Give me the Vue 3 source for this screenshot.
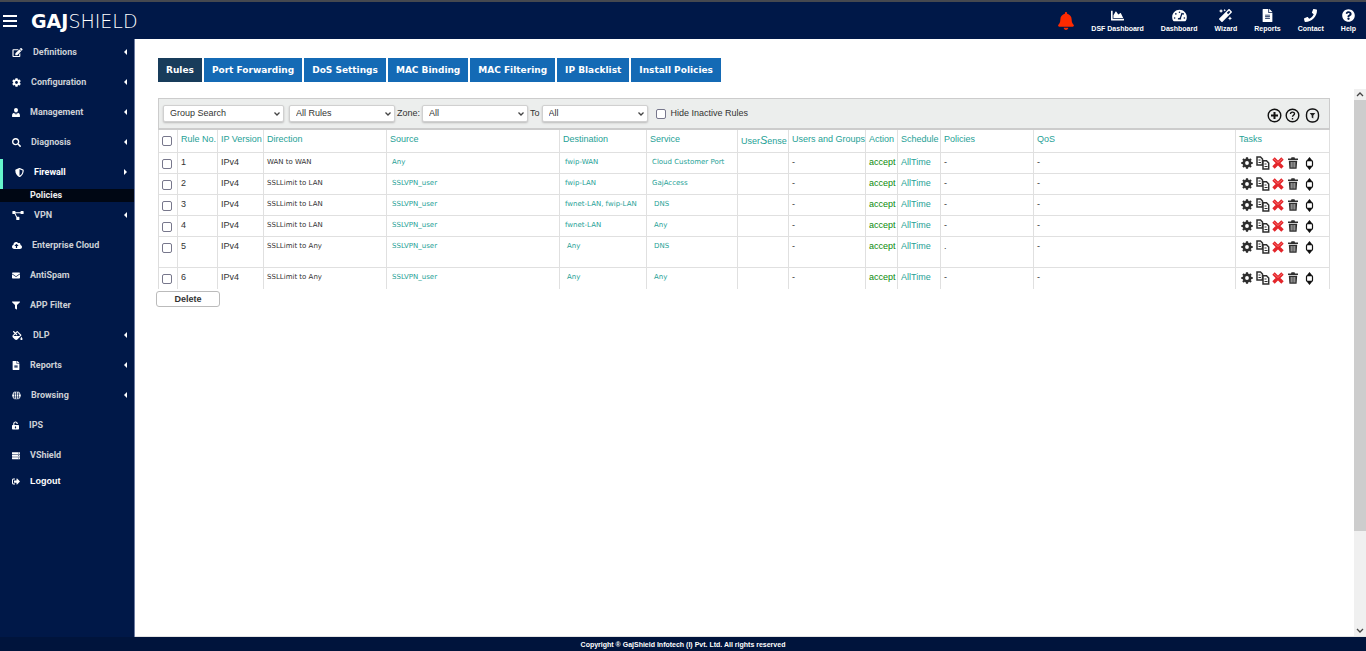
<script setup>
import { ref } from 'vue'

const GEAR = 'M487.4 315.7l-42.6-24.6c4.3-23.2 4.3-47 0-70.2l42.6-24.6c4.9-2.8 7.1-8.6 5.5-14-11.1-35.6-30-67.8-54.7-94.6-3.8-4.1-10-5.1-14.8-2.3L380.8 110c-17.9-15.4-38.5-27.3-60.8-35.1V25.8c0-5.6-3.9-10.5-9.4-11.7-36.7-8.2-74.3-7.8-109.2 0-5.5 1.2-9.4 6.1-9.4 11.7V75c-22.2 7.9-42.8 19.8-60.8 35.1L88.7 85.5c-4.9-2.8-11-1.9-14.8 2.3-24.7 26.7-43.6 58.9-54.7 94.6-1.7 5.4.6 11.2 5.5 14L67.3 221c-4.3 23.2-4.3 47 0 70.2l-42.6 24.6c-4.9 2.8-7.1 8.6-5.5 14 11.1 35.6 30 67.8 54.7 94.6 3.8 4.1 10 5.1 14.8 2.3l42.6-24.6c17.9 15.4 38.5 27.3 60.8 35.1v49.2c0 5.6 3.9 10.5 9.4 11.7 36.7 8.2 74.3 7.8 109.2 0 5.5-1.2 9.4-6.1 9.4-11.7v-49.2c22.2-7.9 42.8-19.8 60.8-35.1l42.6 24.6c4.9 2.8 11 1.9 14.8-2.3 24.7-26.7 43.6-58.9 54.7-94.6 1.5-5.5-.7-11.3-5.6-14.1zM256 336c-44.1 0-80-35.9-80-80s35.9-80 80-80 80 35.9 80 80-35.9 80-80 80z'
const FILE = 'M224 136V0H24C10.700 0 0 10.700 0 24v464c0 13.300 10.700 24 24 24h336c13.300 0 24-10.700 24-24V160H248c-13.200 0-24-10.800-24-24zm64 236c0 6.600-5.400 12-12 12H108c-6.600 0-12-5.400-12-12v-8c0-6.600 5.400-12 12-12h168c6.600 0 12 5.400 12 12v8zm0-64c0 6.600-5.400 12-12 12H108c-6.600 0-12-5.400-12-12v-8c0-6.600 5.400-12 12-12h168c6.600 0 12 5.400 12 12v8zm0-72v8c0 6.600-5.400 12-12 12H108c-6.600 0-12-5.400-12-12v-8c0-6.600 5.400-12 12-12h168c6.600 0 12 5.400 12 12zm96-114.100v6.100H256V0h6.100c6.400 0 12.500 2.500 17 7l97.900 98c4.500 4.500 7 10.600 7 16.900z'

const menu = [
  { label: 'Definitions', arrow: true, w: 11, box: '0 0 576 512', d: 'M402.6 83.2l90.2 90.2c3.8 3.8 3.8 10 0 13.8L274.4 405.6l-92.8 10.3c-12.4 1.4-22.9-9.1-21.5-21.5l10.3-92.8L388.8 83.2c3.8-3.8 10-3.8 13.8 0zm162-22.9l-48.8-48.8c-15.2-15.2-39.9-15.2-55.2 0l-35.4 35.4c-3.8 3.8-3.8 10 0 13.8l90.2 90.2c3.8 3.8 10 3.8 13.8 0l35.4-35.4c15.2-15.3 15.2-40 0-55.2zM384 346.2V448H64V128h229.8c3.2 0 6.2-1.3 8.5-3.5l40-40c7.6-7.6 2.2-20.5-8.5-20.5H48C21.5 64 0 85.500 0 112v352c0 26.500 21.500 48 48 48h352c26.500 0 48-21.500 48-48V306.200c0-10.700-12.900-16-20.500-8.500l-40 40c-2.200 2.300-3.500 5.300-3.500 8.500z' },
  { label: 'Configuration', arrow: true, w: 9, box: '0 0 512 512', d: GEAR },
  { label: 'Management', arrow: true, w: 8, box: '0 0 448 512', d: 'M224 0c66 0 112 52 112 120s-46 136-112 136S112 188 112 120 158 0 224 0zM130 270l50 110 30-80h28l30 80 50-110c70 16 130 60 130 150v60c0 18-14 32-32 32H32c-18 0-32-14-32-32v-60c0-90 60-134 130-150z' },
  { label: 'Diagnosis', arrow: true, w: 9, box: '0 0 512 512', d: 'M505 442.7L405.3 343c-4.5-4.5-10.600-7-17-7H372c27.600-35.300 44-79.700 44-128C416 93.100 322.900 0 208 0S0 93.100 0 208s93.100 208 208 208c48.300 0 92.700-16.400 128-44v16.300c0 6.400 2.500 12.500 7 17l99.700 99.700c9.400 9.400 24.600 9.400 33.900 0l28.300-28.300c9.400-9.400 9.400-24.600.1-34zM208 336c-70.700 0-128-57.200-128-128 0-70.700 57.200-128 128-128 70.700 0 128 57.200 128 128 0 70.700-57.200 128-128 128z' },
  { label: 'Firewall', arrow: true, active: true, child: 'Policies', w: 9, box: '0 0 512 512', d: 'M466.5 83.7l-192-80a48.15 48.15 0 0 0-36.9 0l-192 80C27.7 91.1 16 108.6 16 128c0 198.5 114.5 335.7 221.5 380.3 11.8 4.9 25.1 4.9 36.9 0C360.1 472.6 496 349.3 496 128c0-19.4-11.7-36.9-29.5-44.3zM256.1 446.3l-.1-381 175.9 73.3c-3.300 151.400-82.100 261.100-175.800 307.700z' },
  { label: 'VPN', arrow: true, w: 12, box: '0 0 640 512', d: 'M0 32C0 14 14 0 32 0h112c18 0 32 14 32 32v32h288V32c0-18 14-32 32-32h112c18 0 32 14 32 32v112c0 18-14 32-32 32H496c-18 0-32-14-32-32v-16H176v12l90 180h102c18 0 32 14 32 32v128c0 18-14 32-32 32H254c-18 0-32-14-32-32V366L127 176H32c-18 0-32-14-32-32z' },
  { label: 'Enterprise Cloud', w: 10, box: '0 0 640 512', d: 'M537.6 226.6c4.1-10.7 6.4-22.4 6.4-34.6 0-53-43-96-96-96-19.7 0-38.1 6-53.3 16.2C367 64.2 315.3 32 256 32c-88.4 0-160 71.6-160 160 0 2.7.1 5.4.2 8.1C40.2 219.8 0 273.2 0 336c0 79.5 64.5 144 144 144h368c70.7 0 128-57.3 128-128 0-61.9-44-113.6-102.4-125.4zM393.4 288H328v112c0 8.800-7.200 16-16 16h-48c-8.800 0-16-7.200-16-16V288h-65.400c-14.300 0-21.400-17.200-11.300-27.300l105.400-105.400c6.200-6.200 16.400-6.200 22.600 0l105.400 105.400c10.100 10.100 2.900 27.300-11.300 27.300z' },
  { label: 'AntiSpam', w: 8, box: '0 0 512 512', d: 'M48 64h416c26 0 48 22 48 48v10L280 290c-14 10-34 10-48 0L0 122v-10c0-26 22-48 48-48zM0 176l210 150c28 20 64 20 92 0l210-150v224c0 26-22 48-48 48H48c-26 0-48-22-48-48z' },
  { label: 'APP Filter', w: 8, box: '0 0 512 512', d: 'M487.976 0H24.028C2.71 0-8.047 25.866 7.058 40.971L192 225.941V432c0 7.831 3.821 15.17 10.237 19.662l80 55.98C298.02 518.69 320 507.493 320 487.98V225.941l184.947-184.97C520.021 25.896 509.338 0 487.976 0z' },
  { label: 'DLP', arrow: true, w: 11, box: '0 0 576 512', d: 'M512 320s-64 92.65-64 128c0 35.35 28.66 64 64 64s64-28.65 64-64-64-128-64-128zm-9.37-102.94L294.94 9.37C288.69 3.12 280.5 0 272.31 0s-16.38 3.12-22.62 9.37l-81.58 81.58L81.93 4.76c-6.25-6.25-16.38-6.25-22.62 0L36.69 27.38c-6.24 6.25-6.24 16.38 0 22.62l86.19 86.18-94.76 94.76c-37.49 37.48-37.49 98.26 0 135.75l117.19 117.19c18.74 18.74 43.31 28.12 67.87 28.12 24.57 0 49.13-9.37 67.87-28.12l221.57-221.57c12.5-12.5 12.5-32.75.01-45.25zm-116.22 70.97H65.93c1.36-3.84 3.57-7.98 7.43-11.83l13.15-13.15 81.61-81.61 58.6 58.6c12.49 12.49 32.75 12.49 45.24 0s12.49-32.75 0-45.24l-58.6-58.6 58.95-58.95 162.44 162.44-48.34 48.34z' },
  { label: 'Reports', arrow: true, w: 8, box: '0 0 384 512', d: FILE },
  { label: 'Browsing', arrow: true, w: 9, box: '0 0 512 512', d: 'M236 20v132H160C172 80 202 30 236 20zM276 20c34 10 64 60 76 132h-76zM180 30c-26 28-46 72-54 122H32C60 92 114 46 180 30zM332 30c66 16 120 62 148 122h-94c-8-50-28-94-54-122zM20 188h102a500 500 0 0 0 0 136H20a246 246 0 0 1 0-136zM158 188h78v136h-78a460 460 0 0 1 0-136zM276 188h78a460 460 0 0 1 0 136h-78zM390 188h102a246 246 0 0 1 0 136H390a500 500 0 0 0 0-136zM32 360h94c8 50 28 94 54 122C114 466 60 420 32 360zM160 360h76v132c-34-10-64-60-76-132zM276 360h76c-12 72-42 122-76 132zM386 360h94c-28 60-82 106-148 122 26-28 46-72 54-122z' },
  { label: 'IPS', w: 7, box: '0 0 448 512', d: 'M400 230H152v-90c0-40 32-72 72-72s72 32 72 72v20h72v-20C368 60 304 0 224 0S80 60 80 140v90H48c-26 0-48 22-48 48v186c0 26 22 48 48 48h352c26 0 48-22 48-48V278c0-26-22-48-48-48zM264 400c0 22-18 40-40 40s-40-18-40-40v-50c0-22 18-40 40-40s40 18 40 40z' },
  { label: 'VShield', w: 8, box: '0 0 512 512', d: 'M24 40h464c14 0 24 10 24 24v80c0 14-10 24-24 24H24c-14 0-24-10-24-24V64c0-14 10-24 24-24zM24 200h464c14 0 24 10 24 24v80c0 14-10 24-24 24H24c-14 0-24-10-24-24v-80c0-14 10-24 24-24zM24 360h464c14 0 24 10 24 24v80c0 14-10 24-24 24H24c-14 0-24-10-24-24v-80c0-14 10-24 24-24zM400 84v40h60V84zM400 244v40h60v-40zM400 404v40h60v-40z' },
  { label: 'Logout', logout: true, w: 8, box: '0 0 512 512', d: 'M497 273L329 441c-15 15-41 4.500-41-17v-96H152c-13.300 0-24-10.700-24-24v-96c0-13.300 10.700-24 24-24h136V88c0-21.400 25.900-32 41-17l168 168c9.300 9.400 9.300 24.600 0 34zM192 436v-40c0-6.600-5.400-12-12-12H96c-17.700 0-32-14.300-32-32V160c0-17.700 14.300-32 32-32h84c6.600 0 12-5.400 12-12V76c0-6.600-5.400-12-12-12H96c-53 0-96 43-96 96v192c0 53 43 96 96 96h84c6.600 0 12-5.400 12-12z' },
]

const shortcuts = [
  { label: 'DSF Dashboard', box: '0 0 512 512', d: 'M500 384c6.600 0 12 5.400 12 12v40c0 6.600-5.400 12-12 12H12c-6.600 0-12-5.400-12-12V76c0-6.600 5.400-12 12-12h40c6.600 0 12 5.400 12 12v308h436zM372.700 159.500L288 216l-85.300-113.700c-5.100-6.800-15.500-6.300-19.900 1L96 248v104h384l-89.900-187.800c-3.200-6.500-11.400-8.700-17.400-4.700z' },
  { label: 'Dashboard', box: '0 0 576 512', d: 'M288 32C129 32 0 161 0 320c0 53 14 102 39 145 6 9 16 15 27 15h444c11 0 21-6 27-15 25-43 39-92 39-145C576 161 447 32 288 32zM288 96a32 32 0 1 1 0 64 32 32 0 0 1 0-64zM96 384a32 32 0 1 1 0-64 32 32 0 0 1 0 64zM144 224a32 32 0 1 1 0-64 32 32 0 0 1 0 64zM391 152c13 4 20 18 15 31l-61 184c14 12 7 36 7 49H224c-3-40 16-80 75-64l61-184c4-13 18-20 31-16zM432 224a32 32 0 1 1 0-64 32 32 0 0 1 0 64zM480 384a32 32 0 1 1 0-64 32 32 0 0 1 0 64z' },
  { label: 'Wizard', box: '0 0 512 512', d: 'M224 96l16-32 32-16-32-16-16-32-16 32-32 16 32 16 16 32zM80 160l26.700-53.300L160 80l-53.300-26.700L80 0 53.300 53.300 0 80l53.300 26.700L80 160zm352 128l-26.700 53.300L352 368l53.300 26.700L432 448l26.700-53.300L512 368l-53.300-26.700L432 288zm70.600-193.800L417.800 9.400C411.500 3.100 403.300 0 395.200 0c-8.200 0-16.400 3.100-22.600 9.400L9.400 372.500c-12.500 12.500-12.500 32.800 0 45.300l84.900 84.900c6.200 6.200 14.400 9.400 22.600 9.400 8.200 0 16.400-3.100 22.600-9.400l363.100-363.200c12.500-12.500 12.500-32.800 0-45.300zM359.500 203.500l-51-51 86.600-86.600 51 51-86.600 86.600z' },
  { label: 'Reports', box: '0 0 384 512', d: FILE },
  { label: 'Contact', box: '0 0 512 512', d: 'M493.4 24.6l-104-24c-11.3-2.600-22.900 3.300-27.500 13.900l-48 112c-4.200 9.800-1.400 21.300 6.900 28l60.600 49.600c-36 76.700-98.900 140.500-177.200 177.200l-49.600-60.600c-6.800-8.300-18.200-11.100-28-6.900l-112 48C3.900 366.500-2 378.100.6 389.400l24 104C27.100 504.200 36.700 512 48 512c256.100 0 464-207.500 464-464 0-11.200-7.700-20.900-18.600-23.400z' },
  { label: 'Help', box: '0 0 512 512', d: 'M504 256c0 136.997-111.043 248-248 248S8 392.997 8 256C8 119.083 119.043 8 256 8s248 111.083 248 248zM262.655 90c-54.497 0-89.255 22.957-116.549 63.758-3.536 5.286-2.353 12.415 2.715 16.258l34.699 26.31c5.205 3.947 12.621 3.008 16.665-2.122 17.864-22.658 30.113-35.797 57.303-35.797 20.429 0 45.698 13.148 45.698 32.958 0 14.976-12.363 22.667-32.534 33.976C247.128 238.528 216 254.941 216 296v4c0 6.627 5.373 12 12 12h56c6.627 0 12-5.373 12-12v-1.333c0-28.462 83.186-29.647 83.186-106.667 0-58.002-60.165-102-116.531-102zM256 338c-25.365 0-46 20.635-46 46 0 25.364 20.635 46 46 46s46-20.636 46-46c0-25.365-20.635-46-46-46z' },
]

const tabs = ['Rules', 'Port Forwarding', 'DoS Settings', 'MAC Binding', 'MAC Filtering', 'IP Blacklist', 'Install Policies']
const activeTab = ref('Rules')

const rules = [
  { no: 1, dir: 'WAN to WAN', src: 'Any', dst: 'fwip-WAN', svc: 'Cloud Customer Port', pol: '-' },
  { no: 2, dir: 'SSLLimit to LAN', src: 'SSLVPN_user', dst: 'fwip-LAN', svc: 'GajAccess', pol: '-' },
  { no: 3, dir: 'SSLLimit to LAN', src: 'SSLVPN_user', dst: 'fwnet-LAN, fwip-LAN', svc: 'DNS', pol: '-' },
  { no: 4, dir: 'SSLLimit to LAN', src: 'SSLVPN_user', dst: 'fwnet-LAN', svc: 'Any', pol: '-' },
  { no: 5, dir: 'SSLLimit to Any', src: 'SSLVPN_user', dst: 'Any', svc: 'DNS', pol: '.', tall: true },
  { no: 6, dir: 'SSLLimit to Any', src: 'SSLVPN_user', dst: 'Any', svc: 'Any', pol: '-' },
]
const isShort = (text) => text.length <= 3
</script>

<template>
  <div class="app">
    <header class="topbar">
      <button class="burger" type="button" aria-label="Toggle menu"><span></span><span></span><span></span></button>
      <a class="logo" href="#"><b>GAJ</b><span>SHIELD</span></a>
      <nav class="shortcuts">
        <button class="bell" type="button" aria-label="Alerts">
          <svg viewBox="0 0 448 512" width="16" height="18"><path fill="#ff2a00" d="M224 512c35.320 0 63.970-28.650 63.970-64H160.030c0 35.350 28.650 64 63.970 64zm215.390-149.710c-19.320-20.760-55.470-51.990-55.470-154.290 0-77.700-54.480-139.900-127.940-155.160V32c0-17.670-14.320-32-31.980-32s-31.980 14.330-31.980 32v20.840C118.560 68.100 64.080 130.300 64.080 208c0 102.300-36.150 133.530-55.470 154.290-6 6.450-8.660 14.160-8.610 21.710.11 16.400 12.980 32 32.100 32h383.800c19.120 0 32-15.600 32.100-32 .05-7.550-2.610-15.270-8.610-21.710z" /></svg>
        </button>
        <a v-for="s in shortcuts" :key="s.label" href="#" class="shortcut">
          <svg :viewBox="s.box" height="13" width="15"><path fill="#fff" fill-rule="evenodd" :d="s.d" /></svg>
          <span>{{ s.label }}</span>
        </a>
      </nav>
    </header>

    <div class="body">
      <aside class="sidebar">
        <template v-for="m in menu" :key="m.label">
          <a href="#" class="item" :class="{ active: m.active, logout: m.logout }">
            <svg :viewBox="m.box" :width="m.w" height="9"><path fill="#fff" fill-rule="evenodd" :d="m.d" /></svg>
            <span class="item-label">{{ m.label }}</span>
            <svg v-if="m.arrow" class="arrow" viewBox="0 0 3 6" width="3" height="6">
              <path fill="#fff" :d="m.active ? 'M0 0L3 3L0 6Z' : 'M3 0L0 3L3 6Z'" />
            </svg>
          </a>
          <a v-if="m.child" href="#" class="child">{{ m.child }}</a>
        </template>
      </aside>

      <main class="main">
        <div class="content">
          <div class="tabs" role="tablist">
            <button
              v-for="t in tabs" :key="t" type="button" role="tab" class="tab"
              :class="{ current: t === activeTab }" :aria-selected="t === activeTab" @click="activeTab = t"
            >{{ t }}</button>
          </div>

          <div class="toolbar">
            <div class="select group">
              <select aria-label="Group search"><option>Group Search</option></select>
              <svg viewBox="0 0 6 4" width="6" height="4"><path d="M.5 .5L3 3L5.500 .5" /></svg>
            </div>
            <div class="select">
              <select aria-label="Rules"><option>All Rules</option></select>
              <svg viewBox="0 0 6 4" width="6" height="4"><path d="M.5 .5L3 3L5.500 .5" /></svg>
            </div>
            <label for="zone-from">Zone:</label>
            <div class="select">
              <select id="zone-from"><option>All</option></select>
              <svg viewBox="0 0 6 4" width="6" height="4"><path d="M.5 .5L3 3L5.500 .5" /></svg>
            </div>
            <label for="zone-to">To</label>
            <div class="select">
              <select id="zone-to"><option>All</option></select>
              <svg viewBox="0 0 6 4" width="6" height="4"><path d="M.5 .5L3 3L5.500 .5" /></svg>
            </div>
            <label class="hide"><input type="checkbox" class="check" />Hide Inactive Rules</label>
            <div class="tools">
              <button type="button" aria-label="Add rule">
                <svg viewBox="0 0 15 15" width="15" height="15"><circle cx="7.500" cy="7.500" r="6.300" /><path class="bold" d="M7.500 4V11M4 7.500H11" /></svg>
              </button>
              <button type="button" aria-label="Help">
                <svg viewBox="0 0 15 15" width="15" height="15"><circle cx="7.500" cy="7.500" r="6.300" /><path d="M5.500 6C5.500 3.500 9.500 3.500 9.500 5.800C9.500 7.200 7.500 7.200 7.500 8.700M7.500 10V11.400" /></svg>
              </button>
              <button type="button" class="last" aria-label="Filter">
                <svg viewBox="0 0 15 15" width="15" height="15"><rect x="1.500" y="1" width="12" height="13" rx="5.500" /><path class="solid" d="M4.700 5H10.300L8.300 7.500V10.500L6.700 9.500V7.500Z" /></svg>
              </button>
            </div>
          </div>

          <table class="rules">
            <colgroup>
              <col class="c-check" /><col class="c-no" /><col class="c-ip" /><col class="c-dir" /><col class="c-src" />
              <col class="c-dst" /><col class="c-svc" /><col class="c-sense" /><col class="c-users" /><col class="c-act" />
              <col class="c-sch" /><col class="c-pol" /><col /><col class="c-tasks" />
            </colgroup>
            <thead>
              <tr>
                <th class="tick"><input type="checkbox" class="check" aria-label="Select all rules" /></th>
                <th>Rule No.</th><th>IP Version</th><th>Direction</th><th>Source</th><th>Destination</th><th>Service</th>
                <th class="sense">User<i>S</i>ense</th>
                <th>Users and Groups</th><th>Action</th><th>Schedule</th><th>Policies</th><th>QoS</th><th>Tasks</th>
              </tr>
            </thead>
            <tbody>
              <tr v-for="r in rules" :key="r.no" :class="{ tall: r.tall }">
                <td class="tick"><input type="checkbox" class="check" :aria-label="'Select rule ' + r.no" /></td>
                <td>{{ r.no }}</td>
                <td>IPv4</td>
                <td class="name">{{ r.dir }}</td>
                <td class="name wide"><a href="#">{{ r.src }}</a></td>
                <td class="name wide" :class="{ inset: isShort(r.dst) }"><a href="#">{{ r.dst }}</a></td>
                <td class="name wide" :class="{ inset: isShort(r.svc) }"><a href="#">{{ r.svc }}</a></td>
                <td></td>
                <td>-</td>
                <td class="accept">accept</td>
                <td><a href="#">AllTime</a></td>
                <td>{{ r.pol }}</td>
                <td>-</td>
                <td class="tasks">
                  <div>
                    <button type="button" aria-label="Edit"><svg viewBox="0 0 12 12" width="12" height="12"><path fill="none" stroke="#2e2e2e" stroke-width="2.200" d="M6 .3V2M6 10V11.700M.3 6H2M10 6H11.700M2 2L3.200 3.200M8.800 8.800L10 10M10 2L8.800 3.200M3.200 8.800L2 10" /><circle cx="6" cy="6" r="3.200" fill="none" stroke="#2e2e2e" stroke-width="2.600" /></svg></button>
                    <button type="button" aria-label="Copy"><svg viewBox="0 0 14 14" width="14" height="14"><path fill="#fff" stroke="#2e2e2e" stroke-width="1.500" d="M1 1H4.500L6.500 3V9H1Z" /><path fill="#fff" stroke="#2e2e2e" stroke-width="1.500" d="M7 4.800H10.500L12.700 7V13H7Z" /><path stroke="#2e2e2e" d="M2.500 4H4.500M2.500 6.500H5M8.500 8H10.500M8.500 10.500H11.500" /></svg></button>
                    <button type="button" class="cross" aria-label="Disable"><svg viewBox="0 0 12 12" width="12" height="12"><path fill="none" stroke="#e3262b" stroke-width="3.400" d="M1.500 1.500L10.500 10.500M10.500 1.500L1.500 10.500" /><path fill="none" stroke="#fb6a6a" stroke-width="1" d="M2 2L6 5.500L10 2" /></svg></button>
                    <button type="button" class="trash" aria-label="Delete rule"><svg viewBox="0 0 10 12" width="10" height="12"><path fill="#2e2e2e" d="M0 1.500H3L3.500 .3H6.500L7 1.500H10V3H0ZM.8 3.700H9.200L8.600 11.800H1.400Z" /><path stroke="#ddd" stroke-width=".8" d="M3.200 5V10.500M5 5V10.500M6.800 5V10.500" /></svg></button>
                    <button type="button" class="move" aria-label="Move rule"><svg viewBox="0 0 9 13" width="9" height="13"><path fill="#111" d="M4.500 0L7.300 3.500H1.700ZM4.500 13L7.300 9.500H1.700Z" /><rect x="1.500" y="3.700" width="6" height="5.600" rx="1" fill="#fff" stroke="#111" stroke-width="1.200" /></svg></button>
                  </div>
                </td>
              </tr>
            </tbody>
          </table>
          <button type="button" class="delete">Delete</button>
        </div>

        <div class="scroller" aria-hidden="true">
          <svg viewBox="0 0 12 11" height="11"><path d="M3 7L6 4L9 7" /></svg>
          <div class="track"><div class="thumb"></div></div>
          <svg viewBox="0 0 12 11" height="11"><path d="M3 4L6 7L9 4" /></svg>
        </div>
      </main>
    </div>

    <footer class="footer">Copyright ® GajShield Infotech (I) Pvt. Ltd. All rights reserved</footer>
  </div>
</template>

<style>
body {
  background: #fff;
}
</style>

<style scoped>
.app {
  display: flex;
  flex-direction: column;
  min-height: 100vh;
  font: 9px/11px "Liberation Sans", Arial, sans-serif;
  color: #333;
}
.app *,
.app {
  box-sizing: border-box;
}
a {
  color: #26a196;
  text-decoration: none;
}
button {
  padding: 0;
  border: 0;
  background: none;
  font: inherit;
  color: inherit;
  cursor: pointer;
}
svg {
  display: block;
  flex: none;
}
.topbar {
  display: flex;
  align-items: center;
  height: 39px;
  padding: 1px 10px 0 3px;
  background: #001848;
  border-top: 2px solid #45484f;
}
.burger {
  display: flex;
  flex-direction: column;
  gap: 3px;
  width: 14px;
}
.burger span {
  height: 2px;
  background: #fff;
}
.logo {
  display: flex;
  margin-left: 14px;
  color: #fff;
  font: 19px/20px "DejaVu Sans", Verdana, sans-serif;
}
.logo b {
  font-weight: 700;
}
.logo span {
  font-weight: 200;
}
.shortcuts {
  display: flex;
  align-items: center;
  gap: 17px;
  margin-left: auto;
}
.shortcut {
  display: flex;
  flex-direction: column;
  align-items: center;
  gap: 3px;
  color: #fff;
  font-size: 7px;
  line-height: 8px;
  font-weight: 700;
}
.body {
  flex: 1;
  display: flex;
}
.sidebar {
  width: 135px;
  flex: none;
  background: #001848;
  border-right: 1px solid #6d7ba0;
}
.item {
  display: flex;
  align-items: center;
  height: 30px;
  padding: 0 7px 4px 12px;
  color: #cdd0d6;
  font: 700 9px/12px Roboto, "Liberation Sans", sans-serif;
}
.item-label {
  margin-left: 10px;
}
.item.active {
  border-left: 3px solid #66f5cb;
  color: #fff;
}
.item.logout {
  height: 22px;
  color: #fff;
  font-family: "Liberation Sans", Arial, sans-serif;
}
.arrow {
  margin-left: auto;
}
.child {
  display: block;
  height: 13px;
  padding-left: 30px;
  background: #000714;
  color: #eee;
  font: 700 9px/13px Roboto, "Liberation Sans", sans-serif;
}
.main {
  flex: 1;
  min-width: 0;
  display: flex;
  gap: 24px;
  border-bottom: 1px solid #e4e4e4;
}
.content {
  flex: 1;
  min-width: 0;
  padding: 19px 0 20px 23px;
}
.tabs {
  display: flex;
  gap: 2px;
}
.tab {
  height: 24px;
  padding: 0 8px;
  background: #146ab5;
  color: #fff;
  font: 700 9px/12px "DejaVu Sans", Verdana, sans-serif;
}
.tab.current {
  background: #183c5b;
}
.toolbar {
  display: flex;
  align-items: center;
  height: 32px;
  margin-top: 16px;
  padding: 0 9px 0 4px;
  background: #eceeed;
  border: 1px solid #ccc;
  border-bottom-width: 2px;
}
.select {
  position: relative;
  width: 106px;
}
.select.group {
  width: 121px;
  margin-right: 5px;
}
.select select {
  appearance: none;
  display: block;
  width: 100%;
  height: 17px;
  padding: 0 14px 0 6px;
  border: 1px solid #d0d0d0;
  border-radius: 2px;
  background: #fff;
  box-shadow: 0 1px 2px #bbb;
  color: #333;
  font: inherit;
}
.select svg {
  position: absolute;
  right: 4px;
  top: 7px;
  pointer-events: none;
}
.select path,
.scroller path {
  fill: none;
  stroke: #444;
  stroke-width: 1.3;
}
.toolbar > label {
  margin: 0 2px;
}
.check {
  appearance: none;
  display: block;
  width: 10px;
  height: 10px;
  margin: 0;
  border: 1px solid #77778c;
  border-radius: 2px;
  background: #fff;
}
.toolbar > .hide {
  display: flex;
  align-items: center;
  gap: 5px;
  margin-left: 8px;
}
.tools {
  display: flex;
  gap: 3px;
  margin: 3px 0 0 auto;
}
.tools .last {
  margin-left: 2px;
}
.tools svg {
  fill: none;
  stroke: #111;
  stroke-width: 1.4;
}
.tools .bold {
  stroke-width: 2;
}
.tools .solid {
  fill: #222;
  stroke: none;
}
.rules {
  width: 100%;
  table-layout: fixed;
  border-collapse: separate;
  border-spacing: 0;
  border-left: 1px solid #ddd;
}
.c-check { width: 19px; }
.c-no { width: 40px; }
.c-ip { width: 46px; }
.c-dir { width: 123px; }
.c-src { width: 173px; }
.c-dst { width: 87px; }
.c-svc { width: 91px; }
.c-sense { width: 51px; }
.c-users { width: 77px; }
.c-act { width: 32px; }
.c-sch { width: 43px; }
.c-pol { width: 93px; }
.c-tasks { width: 94px; }
th,
td {
  height: 21px;
  padding: 4px 0 0 3px;
  border-right: 1px solid #e0e0e0;
  border-bottom: 1px solid #e0e0e0;
  text-align: left;
  vertical-align: top;
  white-space: nowrap;
}
th {
  height: 23px;
  color: #26a196;
  font-weight: 400;
}
.tall td {
  height: 31px;
}
tbody tr:last-child td {
  border-bottom: 0;
}
.tick {
  padding: 6px 0 0 3px;
}
.sense {
  padding-top: 5px;
}
.sense i {
  font-size: 11px;
  line-height: 11px;
}
.name {
  font-family: "DejaVu Sans", Verdana, sans-serif;
  font-size: 7px;
}
.name.wide {
  padding-left: 5px;
}
.name.inset {
  padding-left: 7px;
}
.accept {
  color: #0b8a0b;
}
.tasks div {
  display: flex;
  align-items: center;
  padding-left: 2px;
}
.tasks button + button {
  margin-left: 3px;
}
.tasks button + .cross {
  margin-left: 2px;
}
.tasks button + .trash {
  margin-left: 4px;
}
.tasks button + .move {
  margin-left: 7px;
}
td.tasks {
  padding-top: 3px;
}
.delete {
  display: block;
  width: 64px;
  height: 16px;
  margin: 2px 0 0 -2px;
  border: 1px solid #bbb;
  border-radius: 3px;
  background: #fff;
  font-weight: 700;
}
.scroller {
  display: flex;
  flex-direction: column;
  width: 12px;
  margin-top: 50px;
  background: #f0f0f0;
}
.track {
  flex: 1;
}
.thumb {
  height: 82%;
  background: #cdcdcd;
}
.footer {
  height: 14px;
  padding-top: 2px;
  background: #00143c;
  color: #fff;
  font-size: 7px;
  font-weight: 700;
  line-height: 12px;
  text-align: center;
}
</style>
